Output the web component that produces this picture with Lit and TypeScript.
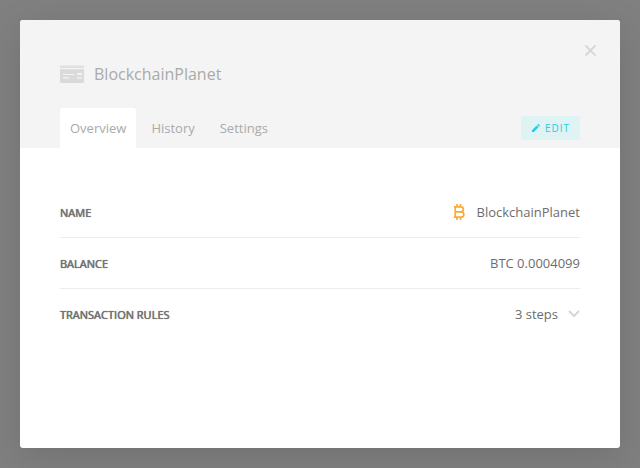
import { LitElement, html, css, svg } from "lit";
import { customElement, state } from "lit/decorators.js";

const cardIcon = svg`<svg viewBox="0 0 24 18" width="24" height="18" aria-hidden="true">
  <path fill="#e0e0e0" d="M1 .5h22a1 1 0 0 1 1 1V3H0V1.500a1 1 0 0 1 1-1z"/>
  <path fill="#dadada" d="M0 4.300h24v12.200a1.500 1.500 0 0 1-1.500 1.500h-21A1.500 1.500 0 0 1 0 16.500z"/>
  <path fill="#f4f4f4" d="M3 9h11v1H3zM3 12.300h6v1.200H3zM17 8h5v2h-5zM17 12.300h5v1.200h-5z"/>
</svg>`;

const closeIcon = svg`<svg viewBox="0 0 12 12" width="12" height="12" aria-hidden="true">
  <path d="M1.500 1.500l10 10M11.500 1.500l-10 10" fill="none" stroke="#d6d6d6" stroke-width="1.800"/>
</svg>`;

const pencilIcon = svg`<svg viewBox="0 0 8 8" width="8" height="8" aria-hidden="true">
  <path fill="#26cde0" d="M0 8V6.200L4.700 1.500l1.800 1.800L1.800 8zM5.200 1l.8-.8a.6.6 0 0 1 .8 0l1 1a.6.6 0 0 1 0 .8l-.8.8z"/>
</svg>`;

const bitcoinIcon = svg`<svg viewBox="0 0 12 16" width="12" height="16" aria-hidden="true">
  <path fill="none" stroke="#fba933" stroke-width="1.700" d="M1 2.800h6.800a2.500 2.500 0 0 1 0 5.100H2M8.200 7.900a2.600 2.600 0 0 1 0 5.300H1M2.200 2.800v10.400M4 0v2.800M7.500 0v2.800M4 13.200V16M7.500 13.200V16"/>
</svg>`;

const chevronIcon = svg`<svg viewBox="0 0 12 8" width="12" height="8" aria-hidden="true">
  <path d="M1 1l5 5 5-5" fill="none" stroke="#d6d6d6" stroke-width="2"/>
</svg>`;

@customElement("app-root")
export class AppRoot extends LitElement {
  @state() private tab = "Overview";

  static styles = css`
    :host {
      display: flex;
      box-sizing: border-box;
      min-height: 100vh;
      padding: 20px;
      background: #808080;
      font-family: "Open Sans", sans-serif;
      font-size: 13px;
      line-height: 20px;
      color: #6d6d6d;
    }
    button {
      font: inherit;
      color: inherit;
      background: none;
      border: 0;
      padding: 0;
      margin: 0;
      cursor: pointer;
    }
    svg {
      display: block;
      flex: none;
    }
    .modal {
      flex: 1;
      border-radius: 3px;
      background: #fff;
      box-shadow: 0 10px 40px rgba(0, 0, 0, 0.12);
      overflow: hidden;
    }
    .header {
      position: relative;
      background: #f4f4f4;
      padding: 42px 40px 0;
      color: #aaa;
    }
    .title {
      display: flex;
      align-items: center;
      gap: 10px;
      margin: 0 0 22px;
      font-size: 16px;
      line-height: 24px;
      font-weight: 400;
    }
    .close {
      position: absolute;
      top: 24px;
      right: 24px;
    }
    .bar {
      display: flex;
      align-items: center;
      justify-content: space-between;
    }
    .tabs {
      display: flex;
      gap: 5px;
    }
    .tab {
      height: 40px;
      padding: 0 10px;
      border-radius: 3px 3px 0 0;
    }
    .tab.active {
      background: #fff;
    }
    .edit {
      display: flex;
      align-items: center;
      gap: 5px;
      height: 24px;
      padding: 0 10px 0 11px;
      border-radius: 2px;
      background: #dff2f4;
      color: #26cde0;
      font-size: 10px;
      letter-spacing: 1px;
    }
    .rows {
      margin: 0;
      padding: 39px 40px;
    }
    .row {
      display: flex;
      align-items: center;
      justify-content: space-between;
      height: 50px;
      border-bottom: 1px solid #ececec;
    }
    .row:last-child {
      border-bottom: 0;
    }
    .label {
      padding-top: 2px;
      font-size: 11px;
      color: #747474;
      text-shadow: 0 0 0 currentColor, 0 0 1px currentColor;
      text-transform: uppercase;
    }
    .value {
      display: flex;
      align-items: center;
      gap: 12px;
      margin: 0;
    }
    .steps {
      display: flex;
      align-items: center;
      gap: 10px;
    }
  `;

  render() {
    return html`
      <section class="modal" role="dialog" aria-labelledby="title">
        <header class="header">
          <button class="close" aria-label="Close">${closeIcon}</button>
          <h1 class="title" id="title">${cardIcon}BlockchainPlanet</h1>
          <div class="bar">
            <div class="tabs" role="tablist">
              ${["Overview", "History", "Settings"].map(
                (name) => html`<button
                  class="tab ${this.tab === name ? "active" : ""}"
                  role="tab"
                  aria-selected=${this.tab === name}
                  @click=${() => (this.tab = name)}
                >${name}</button>`
              )}
            </div>
            <button class="edit">${pencilIcon}EDIT</button>
          </div>
        </header>
        <dl class="rows">
          <div class="row">
            <dt class="label">Name</dt>
            <dd class="value">${bitcoinIcon}BlockchainPlanet</dd>
          </div>
          <div class="row">
            <dt class="label">Balance</dt>
            <dd class="value">BTC 0.0004099</dd>
          </div>
          <div class="row">
            <dt class="label">Transaction rules</dt>
            <dd class="value"><button class="steps">3 steps${chevronIcon}</button></dd>
          </div>
        </dl>
      </section>
    `;
  }
}
